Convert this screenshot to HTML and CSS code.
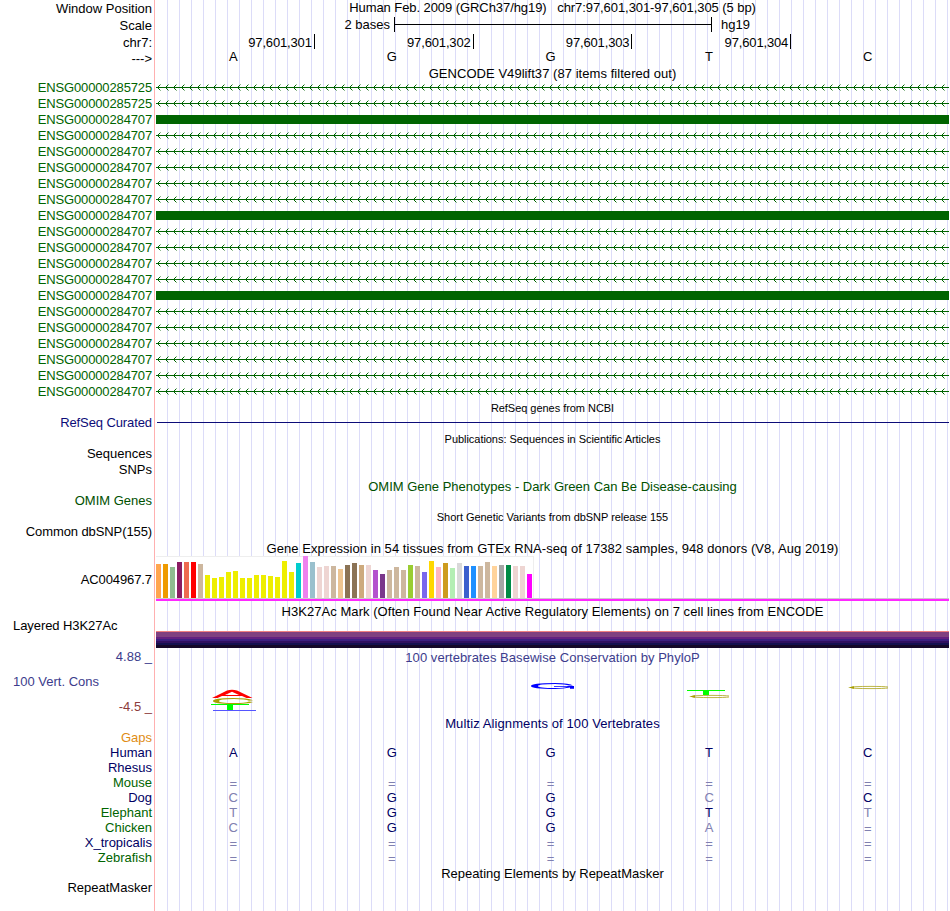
FILE: index.html
```html
<!DOCTYPE html>
<html lang="en">
<head>
<meta charset="utf-8">
<title>Genome Browser</title>
<link rel="stylesheet" href="styles.css">
</head>
<body>
<svg class="defs" width="0" height="0" aria-hidden="true">
  <defs>
    <pattern id="intron" x="1" y="0" width="8" height="7" patternUnits="userSpaceOnUse">
      <g fill="#006400" shape-rendering="crispEdges">
        <rect x="0" y="3" width="8" height="1"/>
        <rect x="1" y="2" width="1" height="3"/>
        <rect x="2" y="1" width="1" height="1"/><rect x="2" y="5" width="1" height="1"/>
        <rect x="3" y="0" width="1" height="1" opacity=".45"/><rect x="3" y="6" width="1" height="1" opacity=".45"/>
      </g>
    </pattern>
  </defs>
</svg>
<main class="browser">
  <div class="row h16"><div class="label low">Window Position</div><div class="track title"><span class="t-pos">Human Feb. 2009 (GRCh37/hg19) &nbsp; chr7:97,601,301-97,601,305 (5 bp)</span></div></div>
  <div class="row h17"><div class="label scale-label">Scale</div><div class="track scale"><span class="scale-text">2 bases</span><span class="scale-bar"></span><span>hg19</span></div></div>
  <div class="row h16"><div class="label chr">chr7:</div><div class="track cells ticks"><span>97,601,301</span><span>97,601,302</span><span>97,601,303</span><span>97,601,304</span><span class="none"></span></div></div>
  <div class="row h17"><div class="label arrow">---&gt;</div><div class="track cells bases"><span>A</span><span>G</span><span>G</span><span>T</span><span>C</span></div></div>
  <div class="row h14"><div class="label"></div><div class="track title"><span class="wide">GENCODE V49lift37 (87 items filtered out)</span></div></div>
  <div id="genes"></div>
  <div class="row h15"><div class="label"></div><div class="track title small"><span>RefSeq genes from NCBI</span></div></div>
  <div class="row h16 navy"><div class="label tight">RefSeq Curated</div><div class="track"><div class="refseq"></div></div></div>
  <div class="row h15"><div class="label"></div><div class="track title small"><span>Publications: Sequences in Scientific Articles</span></div></div>
  <div class="row h16"><div class="label">Sequences</div><div class="track"></div></div>
  <div class="row h16"><div class="label">SNPs</div><div class="track"></div></div>
  <div class="row h15 omim"><div class="label"></div><div class="track title low"><span>OMIM Gene Phenotypes - Dark Green Can Be Disease-causing</span></div></div>
  <div class="row h16 omim"><div class="label">OMIM Genes</div><div class="track"></div></div>
  <div class="row h15"><div class="label"></div><div class="track title small"><span>Short Genetic Variants from dbSNP release 155</span></div></div>
  <div class="row h16"><div class="label tight">Common dbSNP(155)</div><div class="track"></div></div>
  <div class="row h16"><div class="label"></div><div class="track title low"><span class="wide">Gene Expression in 54 tissues from GTEx RNA-seq of 17382 samples, 948 donors (V8, Aug 2019)</span></div></div>
  <div class="row gtex"><div class="label tight">AC004967.7</div><div class="track"><div class="bars" id="bars"></div><div class="gene-model"></div></div></div>
  <div class="row h16"><div class="label"></div><div class="track title lower"><span class="wide">H3K27Ac Mark (Often Found Near Active Regulatory Elements) on 7 cell lines from ENCODE</span></div></div>
  <div class="row h3k"><div class="label left">Layered H3K27Ac</div><div class="track"><div class="signal"></div></div></div>
  <div class="row cons">
    <div class="label"><div class="max">4.88 _</div><div class="name">100 Vert. Cons</div><div class="min">-4.5 _</div></div>
    <div class="track">
      <div class="title low"><span class="wide">100 vertebrates Basewise Conservation by PhyloP</span></div>
      <svg class="logo" width="793" height="50" viewBox="156 665 793 50">
        <path fill="#f00" fill-rule="evenodd" d="M212 698L227 690.5Q232 689 237 690.5L252.500 698H246.500L242 696H222L217.500 698ZM225 695H239L232 691.700Z"/>
        <path fill="#a8a000" fill-rule="evenodd" d="M253 700.300Q248 698 233 698Q213 698 213 701T233 704Q248 704 253 702L249 701.500Q245 703 234 703Q219 703 219 701T234 699Q246 699 249 700.800Z"/>
        <path fill="#0f0" d="M211 704H249V705H233V710H227V705H211Z"/>
        <path fill="#55f" d="M213 710H256V711H213Z"/>
        <path fill="#00f" d="M573 685.500Q570 683 555 683Q531 683 531 686T555 689Q564 689 570 687.600V688.700H574V686H554V686.800H568Q564 688.100 555 688.100Q538 688.100 538 686T555 683.900Q566 683.900 569 685.500Z"/>
        <path fill="#0f0" d="M687 690H725V691H709V695H703V691H687Z"/>
        <g fill="none" stroke="#b4ad32" stroke-width=".9">
          <path d="M729 696Q725 695.400 712 695.400Q692 695.400 692 696.500T712 697.600Q725 697.600 729 697"/>
          <path d="M888 687Q884 686.400 871 686.400Q851 686.400 851 687.500T871 688.600Q884 688.600 888 688"/>
        </g>
        <path fill="#a8a000" d="M689 696.500L695 695.300V697.700ZM848 687.500L854 686.300V688.700Z"/>
      </svg>
    </div>
  </div>
  <div class="row h15 align"><div class="label"></div><div class="track title low"><span class="wider">Multiz Alignments of 100 Vertebrates</span></div></div>
  <div id="species"></div>
  <div class="row h15"><div class="label"></div><div class="track title low"><span>Repeating Elements by RepeatMasker</span></div></div>
  <div class="row h15"><div class="label">RepeatMasker</div><div class="track"></div></div>
</main>
<script src="tracks.js"></script>
</body>
</html>
```
FILE: styles.css
```css
body {
  margin: 0;
  background: #fff;
  color: #000;
  font-family: "Liberation Sans", sans-serif;
  font-size: 13px;
  line-height: 16px;
}

.defs { display: block; }

.browser {
  width: 950px;
  height: 911px;
  overflow: hidden;
  background:
    linear-gradient(#ffb0b0, #ffb0b0) 154px 0 / 1px 100% no-repeat,
    repeating-linear-gradient(90deg, transparent 0 11px, #dcdcf8 11px 12px) 156px 0 / 794px 100% no-repeat;
}

.row {
  display: grid;
  grid-template-columns: 152px 793px;
  column-gap: 4px;
}

.h14 { height: 14px; }
.h15 { height: 15px; }
.h16 { height: 16px; }
.h17 { height: 17px; }

.label {
  text-align: right;
  white-space: nowrap;
}
.low { padding-top: 1px; }
.lower { padding-top: 2px; }
.scale-label { padding-top: 2px; }
.chr { padding-top: 2px; }
.arrow { padding-top: 2px; }

.tight { letter-spacing: -0.1px; }
.wide { letter-spacing: 0.05px; }
.wider { letter-spacing: 0.1px; }
.t-pos { letter-spacing: -0.07px; }

.title {
  display: flex;
  justify-content: center;
  white-space: nowrap;
}
.small { font-size: 11px; letter-spacing: -0.04px; }

.scale { display: flex; padding-top: 1px; white-space: nowrap; }
.scale-text { width: 234px; margin-right: 4px; text-align: right; }
.scale-bar {
  width: 316px;
  height: 15px;
  margin-right: 9px;
  border: solid #000;
  border-width: 0 1px;
  background: linear-gradient(#000, #000) 0 7px / 100% 1px no-repeat;
}

.cells { display: grid; grid-template-columns: repeat(5, 158.6px); }
.ticks { grid-template-columns: repeat(5, 158.8px); }
.ticks span {
  height: 13px;
  margin-top: 1px;
  padding: 2px 2px 0 0;
  line-height: 14px;
  letter-spacing: -0.15px;
  border-right: 1px solid #000;
  text-align: right;
}
.ticks .none { border: 0; }
.bases, .species .cells { width: 793px; margin-left: -2px; text-align: center; }

#genes { color: #006400; letter-spacing: -0.14px; }
.gene { height: 16px; }
.intron { display: block; margin-top: 4px; }
.exon { height: 9px; margin-top: 3px; background: #006400; }

.navy { color: #0c0c78; }
.refseq { height: 1px; margin: 7px 0 0 1px; background: #0c0c78; }
.omim { color: #005000; }

.gtex { height: 46px; }
.gtex .label { padding-top: 16px; }
.bars {
  display: flex;
  align-items: flex-end;
  gap: 2px;
  width: 377px;
  height: 42px;
  background: #fff;
  border-right: 1px solid #eee;
  box-shadow: inset 0 1px #eee;
}
.bar { width: 5px; }
.gene-model {
  height: 2px;
  background: #ff28ff;
  border-top: 1px solid #ccc;
}

.h3k { height: 31px; }
.left { text-align: left; padding-left: 13px; letter-spacing: -0.07px; }
.signal {
  height: 17px;
  margin-top: 13px;
  background: linear-gradient(#f08080 0 1px, #804080 1px 6px, #642080 6px 8px, #3c2080 8px 10px, #301060 10px 12px, #141050 12px 14px, #140828 14px 17px);
}

.cons { height: 66px; }
.cons .max, .cons .name, .cons .track { color: #3c3c8c; }
.cons .min { color: #8c3c3c; }
.cons .name { text-align: left; padding-left: 13px; margin-top: 9px; }
.cons .min { margin-top: 9px; }
.cons .title { height: 15px; }
.logo { display: block; }

.align { color: #000064; }
.species { height: 15px; }
.species .cells { color: #000064; }
.species .diff { color: #8080b0; }
.species .gap { color: #8080b0; padding-top: 1px; }
.blue { color: #000064; }
.green { color: #006400; }
.orange { color: #e08c14; }
```
FILE: tracks.js
```js
const genes = document.getElementById("genes");
const exons = [2, 8, 13];
for (let i = 0; i < 20; i++) {
  const name = i < 2 ? "ENSG00000285725" : "ENSG00000284707";
  const model = exons.includes(i)
    ? '<div class="exon"></div>'
    : '<svg class="intron" width="793" height="7"><rect width="793" height="7" fill="url(#intron)"/></svg>';
  genes.insertAdjacentHTML("beforeend",
    `<div class="row gene"><div class="label">${name}</div><div class="track">${model}</div></div>`);
}

const tan = "#cdb79e", pink = "#eed5d2", yellow = "#eeee00", brown = "#8b7355";
const tissues = [
  ["#ffa54f", 34], ["#ee9a00", 34], ["#8fbc8f", 31], ["#8b1c62", 36], ["#ee6a50", 36], ["#ff0000", 36], [tan, 34],
  [yellow, 23], [yellow, 20], [yellow, 21], [yellow, 26], [yellow, 27], [yellow, 20], [yellow, 20], [yellow, 23],
  [yellow, 23], [yellow, 22], [yellow, 21], [yellow, 37], [yellow, 26],
  ["#00cdcd", 35], ["#ee82ee", 42], ["#9ac0cd", 36], [pink, 31], [pink, 32], [tan, 32], ["#eec591", 29],
  [brown, 33], [brown, 35], ["#cdaa7d", 33], [pink, 33], ["#b452cd", 28], ["#7a378b", 24], [tan, 28], [tan, 31],
  [tan, 28], ["#9acd32", 33], [tan, 32], ["#7a67ee", 26], ["#ffd700", 37], ["#ffb6c1", 31], ["#cd9b1d", 35],
  ["#b4eeb4", 30], ["#d9d9d9", 35], ["#3a5fcd", 32], ["#1e90ff", 32], [tan, 32], [tan, 36], ["#ffd39b", 32],
  ["#a6a6a6", 33], ["#008b45", 33], [pink, 32], [pink, 32], ["#ff00ff", 24]
];
document.getElementById("bars").innerHTML = tissues
  .map(([color, h]) => `<div class="bar" style="height:${h}px;background:${color}"></div>`).join("");

const human = "AGGTC";
const species = [
  ["Gaps", "orange", "     "], ["Human", "blue", "AGGTC"], ["Rhesus", "blue", "     "], ["Mouse", "green", "====="],
  ["Dog", "blue", "CGGCC"], ["Elephant", "green", "TGGTT"], ["Chicken", "green", "CGGA="],
  ["X_tropicalis", "blue", "====="], ["Zebrafish", "green", "====="]
];
document.getElementById("species").innerHTML = species.map(([name, color, seq]) => {
  const cells = [...seq].map((b, i) =>
    `<span class="${b === "=" ? "gap" : b === human[i] ? "same" : "diff"}">${b}</span>`).join("");
  return `<div class="row species"><div class="label ${color}">${name}</div><div class="track cells">${cells}</div></div>`;
}).join("");
```
